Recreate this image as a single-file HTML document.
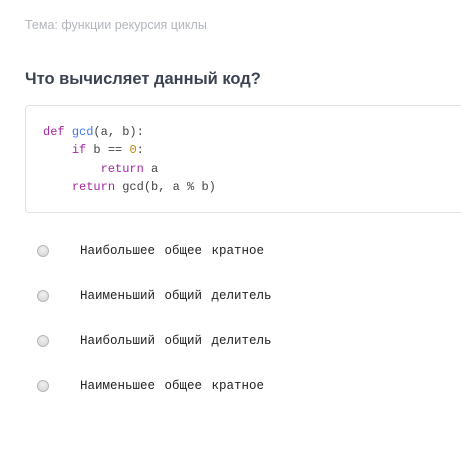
<!DOCTYPE html>
<html><head><meta charset="utf-8"><style>
body{margin:0;background:#fff;width:461px;height:453px;overflow:hidden;position:relative;font-family:"Liberation Sans",sans-serif}
.tema{position:absolute;left:25px;top:18px;font-size:12.5px;color:#b3b6bd}
h1{position:absolute;left:25px;top:70px;margin:0;font-size:16.5px;font-weight:bold;color:#3c4350}
.code{position:absolute;left:25px;top:105px;width:460px;height:108px;border:1px solid #e2e2e2;border-radius:4px;box-sizing:border-box}
pre{position:absolute;left:43px;top:123px;margin:0;font-family:"Liberation Mono",monospace;font-size:12px;line-height:18.3px;color:#444}
.k{color:#a626a4}.f{color:#4078f2}.n{color:#c18401}
.opt{position:absolute;left:37px;font-family:"Liberation Mono",monospace;font-size:12.5px;color:#222}
.opt i{position:absolute;left:0;top:0;width:10px;height:10px;border:1px solid #b8b8b8;border-radius:50%;background:radial-gradient(circle at 50% 35%,#f0f0f0,#d4d4d4)}
.opt span{position:absolute;left:43px;top:-1px;white-space:pre;word-spacing:2px}
</style></head><body>
<div class="tema">Тема: функции рекурсия циклы</div>
<h1>Что вычисляет данный код?</h1>
<div class="code"></div>
<pre><span class="k">def</span> <span class="f">gcd</span>(a, b):
    <span class="k">if</span> b == <span class="n">0</span>:
        <span class="k">return</span> a
    <span class="k">return</span> gcd(b, a % b)</pre>
<div class="opt" style="top:245px"><i></i><span>Наибольшее общее кратное</span></div>
<div class="opt" style="top:290px"><i></i><span>Наименьший общий делитель</span></div>
<div class="opt" style="top:335px"><i></i><span>Наибольший общий делитель</span></div>
<div class="opt" style="top:380px"><i></i><span>Наименьшее общее кратное</span></div>
</body></html>
